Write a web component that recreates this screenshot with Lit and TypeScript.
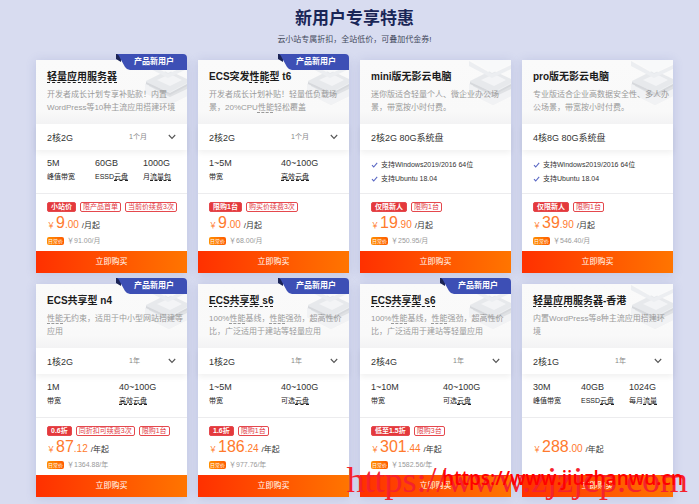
import { LitElement, html, css, svg, nothing } from "lit";
import { customElement, property } from "lit/decorators.js";

interface Metric {
  value: string;
  label: string;
}

interface Offer {
  name: string;
  lines: string[];
  ribbon?: boolean;
  spec: string;
  term?: string;
  metrics?: Metric[];
  checks?: string[];
  badge?: string;
  tags?: string[];
  whole: string;
  cents: string;
  unit: string;
  usual?: string;
}

const SUPPORTED = ["支持Windows2019/2016 64位", "支持Ubuntu 18.04"];

// Square brackets mark glossary terms, which get a dashed underline.
const OFFERS: Offer[] = [
  {
    name: "[轻量应用服务器]",
    lines: ["开发者成长计划专享补贴款！内置", "WordPress等10种主流应用搭建环境"],
    ribbon: true,
    spec: "2核2G",
    term: "1个月",
    metrics: [
      { value: "5M", label: "峰值带宽" },
      { value: "60GB", label: "ESSD[云盘]" },
      { value: "1000G", label: "月[流量包]" },
    ],
    badge: "小站价",
    tags: ["限产品首单", "当前价续费3次"],
    whole: "9",
    cents: ".00",
    unit: "/月起",
    usual: "￥91.00/月",
  },
  {
    name: "ECS突发[性能]型 t6",
    lines: ["开发者成长计划补贴！轻量低负载场", "景，20%CPU[性能]轻松覆盖"],
    ribbon: true,
    spec: "2核2G",
    term: "1个月",
    metrics: [
      { value: "1~5M", label: "带宽" },
      { value: "40~100G", label: "[高效云盘]" },
    ],
    badge: "限购1台",
    tags: ["购买价续费3次"],
    whole: "9",
    cents: ".00",
    unit: "/月起",
    usual: "￥68.00/月",
  },
  {
    name: "mini版无影云电脑",
    lines: ["迷你版适合轻量个人、微企业办公场", "景，带宽按小时付费。"],
    spec: "2核2G 80G系统盘",
    checks: SUPPORTED,
    badge: "仅限新人",
    tags: ["限购1台"],
    whole: "19",
    cents: ".90",
    unit: "/月起",
    usual: "￥250.95/月",
  },
  {
    name: "pro版无影云电脑",
    lines: ["专业版适合企业高数据安全性、多人办", "公场景，带宽按小时付费。"],
    spec: "4核8G 80G系统盘",
    checks: SUPPORTED,
    badge: "仅限新人",
    tags: ["限购1台"],
    whole: "39",
    cents: ".90",
    unit: "/月起",
    usual: "￥546.40/月",
  },
  {
    name: "ECS共享型 n4",
    lines: ["[性能]无约束，适用于中小型网站搭建等", "应用"],
    ribbon: true,
    spec: "1核2G",
    term: "1年",
    metrics: [
      { value: "1M", label: "带宽" },
      { value: "40~100G", label: "[高效云盘]" },
    ],
    badge: "0.6折",
    tags: ["同折扣可续费3次", "限购1台"],
    whole: "87",
    cents: ".12",
    unit: "/年起",
    usual: "￥1364.88/年",
  },
  {
    name: "[ECS共享型 s6]",
    lines: ["100%[性能]基线，[性能]强劲，超高性价", "比，广泛适用于建站等轻量应用"],
    ribbon: true,
    spec: "1核2G",
    term: "1年",
    metrics: [
      { value: "1~5M", label: "带宽" },
      { value: "40~100G", label: "可选[云盘]" },
    ],
    badge: "1.6折",
    tags: ["限购1台"],
    whole: "186",
    cents: ".24",
    unit: "/年起",
    usual: "￥977.76/年",
  },
  {
    name: "[ECS共享型 s6]",
    lines: ["100%[性能]基线，[性能]强劲，超高性价", "比，广泛适用于建站等轻量应用"],
    ribbon: true,
    spec: "2核4G",
    term: "1年",
    metrics: [
      { value: "1~10M", label: "带宽" },
      { value: "40~100G", label: "可选[云盘]" },
    ],
    badge: "低至1.5折",
    tags: ["限购3台"],
    whole: "301",
    cents: ".44",
    unit: "/年起",
    usual: "￥1582.56/年",
  },
  {
    name: "[轻量应用服务器]-香港",
    lines: ["内置WordPress等8种主流应用搭建环", "境"],
    spec: "2核1G",
    term: "1年",
    metrics: [
      { value: "30M", label: "峰值带宽" },
      { value: "40GB", label: "ESSD[云盘]" },
      { value: "1024G", label: "每月[流量]" },
    ],
    whole: "288",
    cents: ".00",
    unit: "/年起",
  },
];

const marked = (text: string) =>
  text
    .split(/(\[[^\]]+\])/)
    .filter(Boolean)
    .map((part) =>
      part.startsWith("[") ? html`<span class="term">${part.slice(1, -1)}</span>` : part
    );

const checkIcon = html`<svg class="check" viewBox="0 0 7 6" aria-hidden="true">
  ${svg`<path d="M1 3.2 2.7 5 6.2 .9" fill="none" stroke="#5a68c4" stroke-width="1.1" />`}
</svg>`;

const chevronIcon = html`<svg class="chevron" viewBox="0 0 8 6" aria-hidden="true">
  ${svg`<path d="M.8 1 4 4.4 7.2 1" fill="none" stroke="#555" stroke-width="1.1" />`}
</svg>`;

const stackArt = html`<svg class="art" viewBox="0 0 42 46" aria-hidden="true">
  ${svg`
    <path d="M0 24 22 12 42 23V36L24 45 0 33Z" fill="#eef0f2" />
    <path d="M0 24 24 37 42 27V36L24 45 0 33Z" fill="#f1f2f4" />
    <path d="M4 23 24 34 42 25V29L25 37 4 26Z" fill="#dfe1e4" />
    <path d="M1 21 23 10 42 19V23L25 32 1 23Z" fill="#e7e9ec" />
    <path d="M1 22 25 33 42 24V26L25 35 1 24Z" fill="#d6d8dc" />
    <path d="M12 20 25 14 37 20 25 26Z" fill="#f3f4f6" />
    <path d="M0 1 23 14 42 5V9L23 18 0 6Z" fill="#eceef1" />
    <path d="M3 0H42V4L23 13Z" fill="#f8f9fa" />`}
</svg>`;

@customElement("offer-card")
export class OfferCard extends LitElement {
  @property({ attribute: false }) offer!: Offer;

  static styles = css`
    :host {
      display: block;
      min-width: 0;
    }
    * {
      box-sizing: border-box;
    }
    .card {
      position: relative;
      display: flex;
      flex-direction: column;
      height: 100%;
      background: #fff;
      box-shadow: 0 1px 10px rgba(86, 98, 168, 0.2);
      white-space: nowrap;
      color: #333;
    }
    .term {
      text-decoration: underline dashed 1px;
      text-underline-offset: 2px;
      text-decoration-skip-ink: none;
    }
    .ribbon {
      position: absolute;
      top: -6px;
      right: 0;
      width: 71px;
      height: 16px;
      display: grid;
    }
    .ribbon > * {
      grid-area: 1 / 1;
    }
    .ribbon svg {
      width: 71px;
      height: 16px;
    }
    .ribbon span {
      padding-left: 18px;
      color: #fff;
      font-size: 8px;
      font-weight: 700;
      line-height: 16px;
    }
    .head {
      position: relative;
      min-height: 64px;
      padding: 10px 11px 9px;
      background: linear-gradient(#fafafa, #f9f9f9 80%, #f3f3f4);
    }
    .art {
      position: absolute;
      top: 0;
      right: 0;
      width: 42px;
      height: 46px;
    }
    .name {
      position: relative;
      margin: 0 0 4px;
      font-size: 10px;
      font-weight: 700;
      line-height: 14px;
      color: #1c1c1c;
    }
    .about {
      position: relative;
      margin: 0;
      font-size: 8px;
      line-height: 13px;
      color: #999;
    }
    .spec {
      display: flex;
      align-items: center;
      justify-content: space-between;
      height: 26px;
      padding: 0 11px;
      font-size: 9px;
      box-shadow: 0 3px 6px rgba(0, 0, 0, 0.06);
    }
    .picker {
      display: grid;
      align-items: center;
      width: 47px;
    }
    .picker > * {
      grid-area: 1 / 1;
    }
    select {
      appearance: none;
      width: 100%;
      margin: 0;
      padding: 0;
      border: 0;
      background: none;
      font-family: inherit;
      font-size: 7px;
      line-height: 12px;
      color: #888;
    }
    .chevron {
      justify-self: end;
      width: 8px;
      height: 6px;
      pointer-events: none;
    }
    .details {
      min-height: 44px;
      border-bottom: 1px solid #ececee;
    }
    .metrics {
      display: grid;
      grid-auto-flow: column;
      grid-auto-columns: minmax(0, 1fr);
      column-gap: 4px;
      margin: 0;
      padding: 6px 0 0 11px;
    }
    .metric {
      display: flex;
      flex-direction: column-reverse;
    }
    .metric dt {
      font-size: 7px;
      line-height: 14px;
      color: #222;
    }
    .metric dd {
      margin: 0;
      font-size: 9px;
      line-height: 14px;
    }
    .metric .term {
      text-underline-offset: 1px;
    }
    .checks {
      margin: 0;
      padding: 8px 11px 0;
      list-style: none;
      font-size: 7px;
      line-height: 14px;
    }
    .checks li {
      display: flex;
      align-items: center;
      gap: 3px;
    }
    .check {
      width: 7px;
      height: 6px;
    }
    .pricing {
      flex: 1;
      min-height: 57px;
      padding: 8px 11px 5px;
    }
    .tags {
      display: flex;
      gap: 4px;
      height: 10px;
    }
    .tag {
      padding: 0 2px;
      border: 1px solid #e5484d;
      border-radius: 2px;
      font-size: 7px;
      line-height: 8px;
      color: #e2393f;
    }
    .tag.solid {
      padding: 0 3px;
      background: #e4393c;
      color: #fff;
      font-weight: 700;
    }
    .price {
      display: flex;
      align-items: baseline;
      height: 20px;
      margin: 1px 0 3px;
      line-height: 20px;
      color: #ff7a2d;
    }
    .sign,
    .unit {
      font-size: 8px;
    }
    .sign {
      margin-right: 1px;
    }
    .whole {
      font-size: 16px;
    }
    .cents {
      font-size: 10px;
    }
    .unit {
      margin-left: 3px;
      color: #333;
    }
    .usual {
      display: flex;
      align-items: center;
      gap: 3px;
      height: 10px;
      font-size: 7px;
      line-height: 10px;
      color: #999;
    }
    .usual b {
      padding: 0 1px;
      border-radius: 2px;
      background: linear-gradient(90deg, #ff9000, #ff5a00);
      font-size: 5px;
      font-weight: 400;
      line-height: 8px;
      color: #fff;
    }
    button {
      height: 22px;
      padding: 0;
      border: 0;
      background: linear-gradient(90deg, #ff3000, #ff7500);
      font-family: inherit;
      font-size: 8px;
      line-height: 22px;
      color: #fff;
      cursor: pointer;
    }
  `;

  private renderSpec(o: Offer) {
    if (!o.term) return html`<div class="spec">${o.spec}</div>`;
    return html`<div class="spec">
      <label for="term">${o.spec}</label>
      <div class="picker">
        <select id="term">
          <option>${o.term}</option>
        </select>
        ${chevronIcon}
      </div>
    </div>`;
  }

  private renderDetails(o: Offer) {
    if (o.checks) {
      return html`<ul class="checks">
        ${o.checks.map((c) => html`<li>${checkIcon}<span>${c}</span></li>`)}
      </ul>`;
    }
    return html`<dl class="metrics">
      ${o.metrics?.map(
        (m) => html`<div class="metric"><dt>${marked(m.label)}</dt><dd>${m.value}</dd></div>`
      )}
    </dl>`;
  }

  render() {
    const o = this.offer;
    return html`<article class="card">
      <header class="head">
        ${stackArt}
        <h3 class="name">${marked(o.name)}</h3>
        <p class="about">${o.lines.map((l, i) => html`${i ? html`<br />` : nothing}${marked(l)}`)}</p>
      </header>
      ${this.renderSpec(o)}
      <div class="details">${this.renderDetails(o)}</div>
      <div class="pricing">
        <div class="tags">
          ${o.badge ? html`<span class="tag solid">${o.badge}</span>` : nothing}
          ${o.tags?.map((t) => html`<span class="tag">${t}</span>`)}
        </div>
        <div class="price">
          <span class="sign">￥</span><span class="whole">${o.whole}</span
          ><span class="cents">${o.cents}</span><span class="unit">${o.unit}</span>
        </div>
        ${o.usual ? html`<div class="usual"><b>日常价</b><span>${o.usual}</span></div>` : nothing}
      </div>
      <button type="button">立即购买</button>
      ${o.ribbon
        ? html`<div class="ribbon">
            <svg viewBox="0 0 71 16" aria-hidden="true">
              ${svg`<path d="M0 0H5V8L0 5Z" fill="#1b2456" />
                <path d="M1 0H67Q71 0 71 4V16H14Q11 16 9 13L4 4Q3 1 1 0Z" fill="#3d4fb5" />`}
            </svg>
            <span>产品新用户</span>
          </div>`
        : nothing}
    </article>`;
  }
}

@customElement("app-root")
export class AppRoot extends LitElement {
  static styles = css`
    :host {
      display: block;
      min-height: 100vh;
      background: #d8dcf0;
      font-family: "Liberation Sans", "Noto Sans CJK SC", sans-serif;
    }
    * {
      box-sizing: border-box;
    }
    .page {
      position: relative;
      padding: 7px 26px 7px 36px;
      overflow: hidden;
    }
    .title {
      margin: 0;
      font-size: 17px;
      font-weight: 700;
      line-height: 24px;
      text-align: center;
      color: #1a2657;
    }
    .subtitle {
      margin: 3px 0 14px;
      font-size: 8px;
      line-height: 12px;
      text-align: center;
      color: #444a5c;
    }
    .offers {
      display: grid;
      grid-template-columns: repeat(4, minmax(0, 1fr));
      gap: 11px;
    }
    .mark {
      position: absolute;
      white-space: nowrap;
      pointer-events: none;
    }
    .mark.serif {
      right: 11px;
      bottom: 4px;
      font-family: "Liberation Serif", serif;
      font-size: 36px;
      line-height: 40px;
      color: #f5222d;
    }
    .mark.sans {
      right: 16px;
      bottom: 14px;
      font-family: "Open Sans", sans-serif;
      font-size: 19px;
      font-weight: 600;
      line-height: 24px;
      color: #ff0000;
    }
  `;

  render() {
    return html`<main class="page">
      <h2 class="title">新用户专享特惠</h2>
      <p class="subtitle">云小站专属折扣，全站低价，可叠加代金券!</p>
      <section class="offers">
        ${OFFERS.map((o) => html`<offer-card .offer=${o}></offer-card>`)}
      </section>
      <div class="mark serif">https://www.zjzjcp.com</div>
      <div class="mark sans">https://www.jiuzhanwu.cn</div>
    </main>`;
  }
}
